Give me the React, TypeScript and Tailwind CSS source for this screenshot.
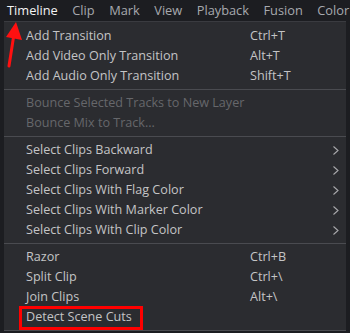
const menus = ['Timeline', 'Clip', 'Mark', 'View', 'Playback', 'Fusion', 'Color'];

type Item = { label: string; shortcut?: string; sub?: boolean; disabled?: boolean };

const groups: Item[][] = [
  [
    { label: 'Add Transition', shortcut: 'Ctrl+T' },
    { label: 'Add Video Only Transition', shortcut: 'Alt+T' },
    { label: 'Add Audio Only Transition', shortcut: 'Shift+T' },
  ],
  [
    { label: 'Bounce Selected Tracks to New Layer', disabled: true },
    { label: 'Bounce Mix to Track...', disabled: true },
  ],
  [
    { label: 'Select Clips Backward', sub: true },
    { label: 'Select Clips Forward', sub: true },
    { label: 'Select Clips With Flag Color', sub: true },
    { label: 'Select Clips With Marker Color', sub: true },
    { label: 'Select Clips With Clip Color', sub: true },
  ],
  [
    { label: 'Razor', shortcut: 'Ctrl+B' },
    { label: 'Split Clip', shortcut: 'Ctrl+\\' },
    { label: 'Join Clips', shortcut: 'Alt+\\' },
    { label: 'Detect Scene Cuts' },
  ],
];

function Row({ item, boxed }: { item: Item; boxed?: boolean }) {
  return (
    <div className="relative flex h-5 items-center whitespace-nowrap">
      <span className={`w-[246px] shrink-0 pl-[22px] ${item.disabled ? 'text-[#66676b]' : 'text-[#c4c4c6]'}`}>
        <span className={boxed ? 'relative inline-block' : ''}>
          {item.label}
          {boxed && (
            <span className="absolute -bottom-[4px] -left-[7px] -right-[11px] -top-[2px] border-[3px] border-[#ff0000]" />
          )}
        </span>
      </span>
      <span className="text-[#c4c4c6]">{item.shortcut}</span>
      {item.sub && (
        <svg className="absolute right-[7px] top-[6px]" width="6" height="9" viewBox="0 0 6 9" fill="none">
          <path d="M0.5 0.5 L5 4.5 L0.5 8.5" stroke="#a9a9ac" strokeWidth="1.1" />
        </svg>
      )}
    </div>
  );
}

export default function App() {
  return (
    <div
      className="relative h-[333px] w-[350px] overflow-hidden bg-[#1c1d21] text-[12.6px]"
      style={{ fontFamily: '"Open Sans", "Noto Sans", sans-serif' }}
    >
      <div className="flex h-[21px] items-center gap-[14.5px] whitespace-nowrap pl-[7px] text-[12.8px] text-[#a7a9ae]">
        {menus.map((m, i) => (
          <span key={m} className={i === 0 ? 'text-[#f4f4f4]' : ''}>
            {m}
          </span>
        ))}
      </div>
      <div className="mx-[4px] border-t border-[#3a3b40] bg-[#2b2c30] pt-[4px]">
        {groups.map((g, gi) => (
          <div key={gi}>
            {gi > 0 && <div className="my-[3px] h-px bg-[#4a4b50]" />}
            {g.map((it) => (
              <Row key={it.label} item={it} boxed={it.label === 'Detect Scene Cuts'} />
            ))}
          </div>
        ))}
        <div className="mt-[3px] h-px bg-[#4a4b50]" />
      </div>
      <svg className="absolute left-0 top-[20px]" width="28" height="50" viewBox="0 0 28 50">
        <path d="M9 46 L14 14" stroke="#ff1010" strokeWidth="3" strokeLinecap="round" />
        <path d="M16 2 L22 20 L6 17 Z" fill="#ff1010" />
      </svg>
    </div>
  );
}
